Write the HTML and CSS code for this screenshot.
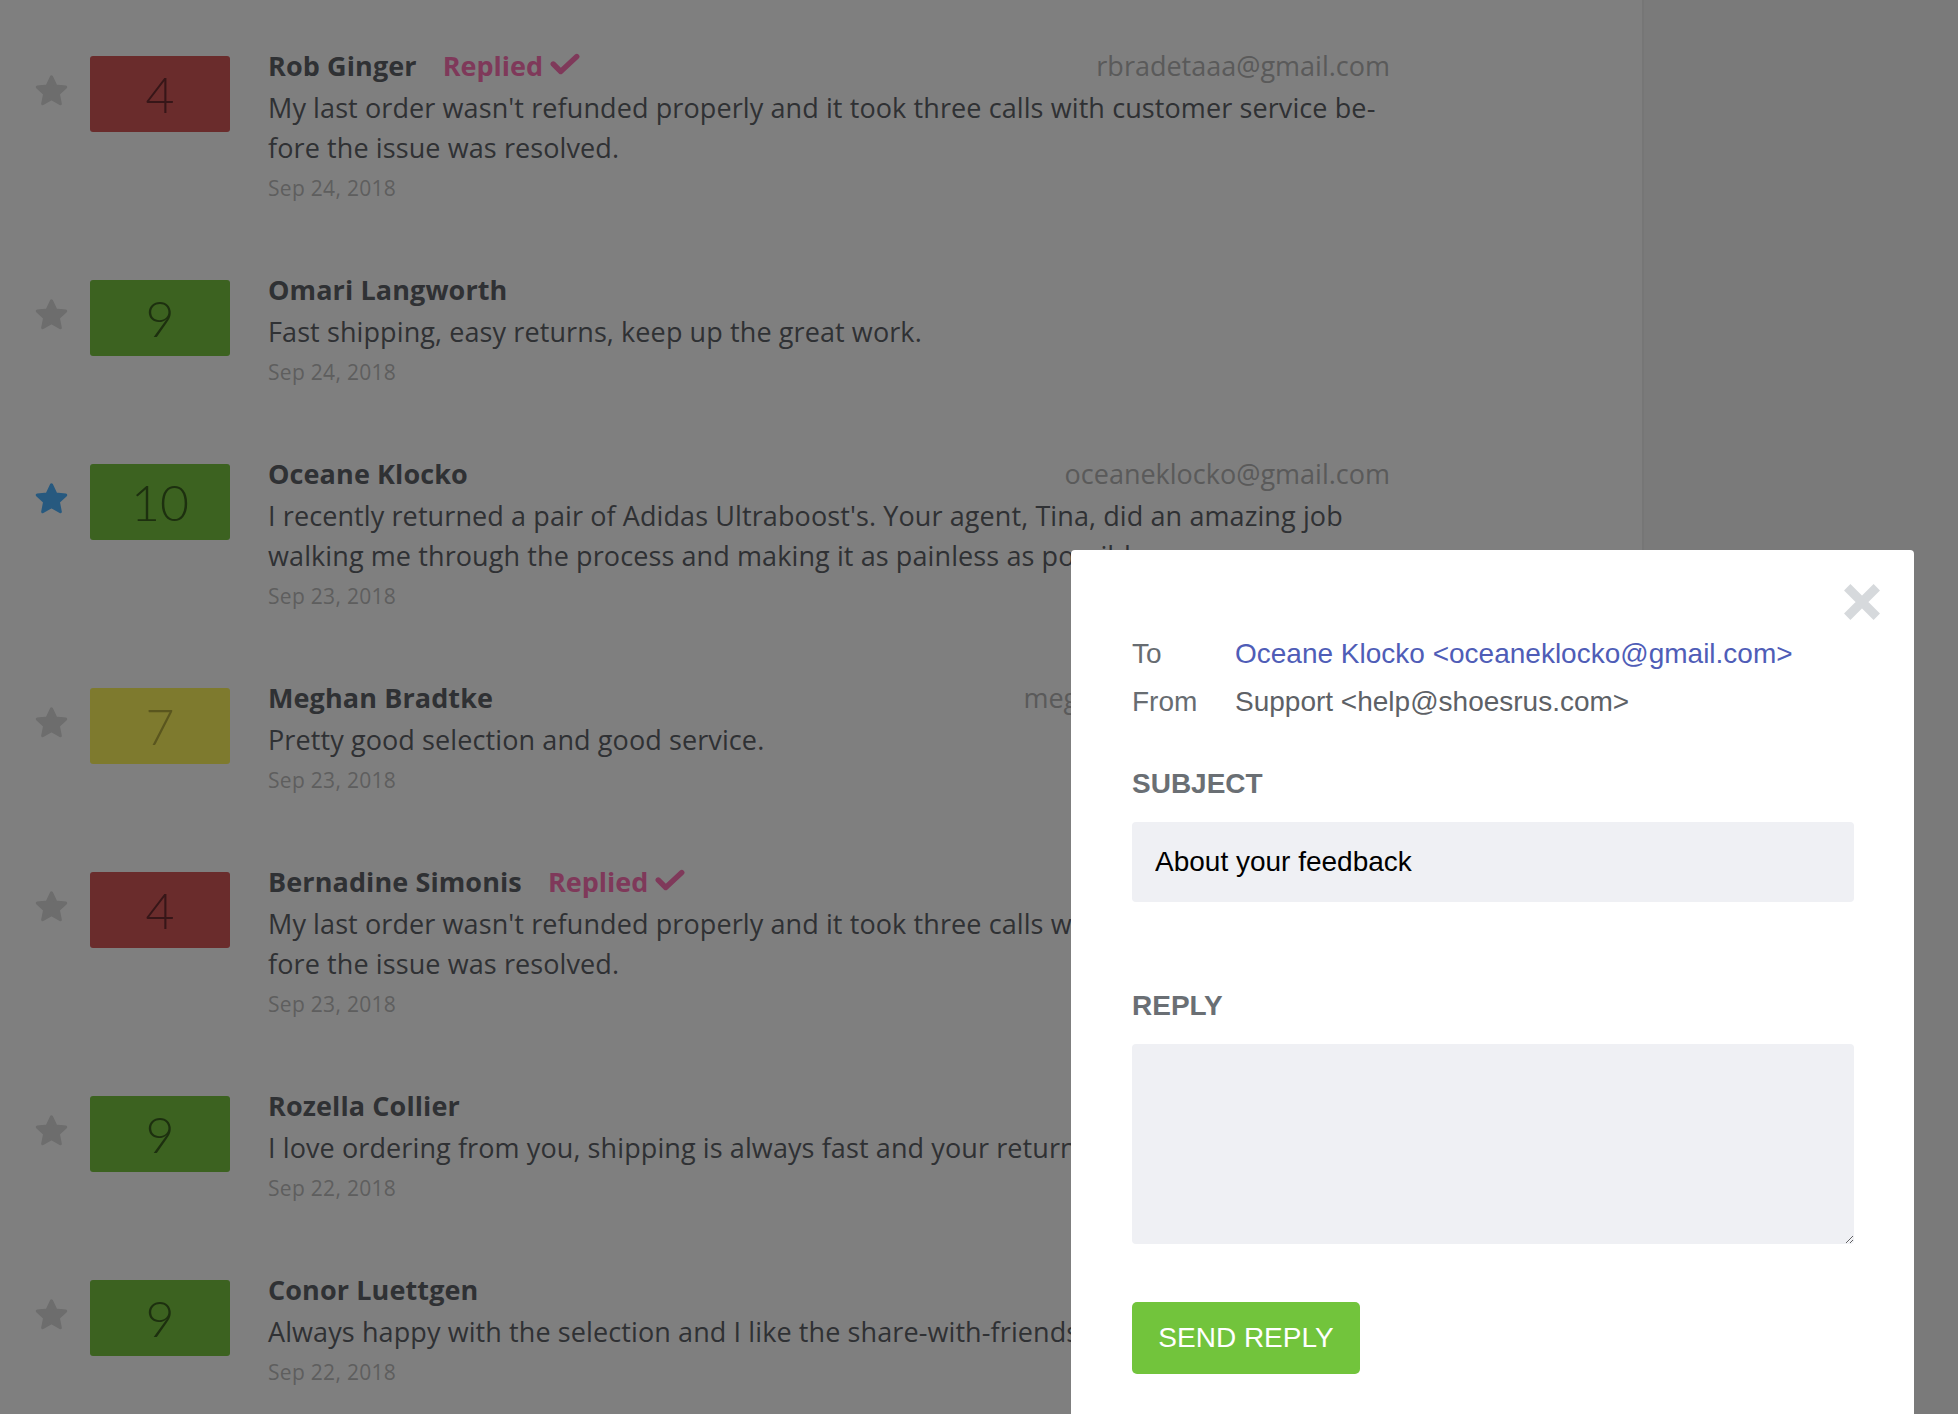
FILE: index.html
```html
<!DOCTYPE html>
<html lang="en">
<head>
<meta charset="utf-8">
<title>Feedback – Reply</title>
<link rel="stylesheet" href="styles.css">
</head>
<body>
<div class="page">
  <main class="feed">
    <div class="review">
      <svg class="star" viewBox="0 0 24 24"><polygon points="12,2.5 14.9,8.6 21.5,9.4 16.6,13.9 17.9,20.5 12,17.2 6.1,20.5 7.4,13.9 2.5,9.4 9.1,8.6"/></svg>
      <div class="score score-low">4</div>
      <div class="review-body">
        <div class="review-head">
          <span class="name">Rob Ginger</span>
          <span class="replied">Replied <svg class="check" viewBox="0 0 28 20"><polyline points="3,10 10,17 25,3"/></svg></span>
          <span class="email">rbradetaaa@gmail.com</span>
        </div>
        <p class="text">My last order wasn't refunded properly and it took three calls with customer service be&shy;fore the issue was resolved.</p>
        <div class="date">Sep 24, 2018</div>
      </div>
    </div>

    <div class="review">
      <svg class="star" viewBox="0 0 24 24"><polygon points="12,2.5 14.9,8.6 21.5,9.4 16.6,13.9 17.9,20.5 12,17.2 6.1,20.5 7.4,13.9 2.5,9.4 9.1,8.6"/></svg>
      <div class="score score-high">9</div>
      <div class="review-body">
        <div class="review-head">
          <span class="name">Omari Langworth</span>
        </div>
        <p class="text">Fast shipping, easy returns, keep up the great work.</p>
        <div class="date">Sep 24, 2018</div>
      </div>
    </div>

    <div class="review">
      <svg class="star star-on" viewBox="0 0 24 24"><polygon points="12,2.5 14.9,8.6 21.5,9.4 16.6,13.9 17.9,20.5 12,17.2 6.1,20.5 7.4,13.9 2.5,9.4 9.1,8.6"/></svg>
      <div class="score score-high">10</div>
      <div class="review-body">
        <div class="review-head">
          <span class="name">Oceane Klocko</span>
          <span class="email">oceaneklocko@gmail.com</span>
        </div>
        <p class="text">I recently returned a pair of Adidas Ultraboost's. Your agent, Tina, did an amazing job walking me through the process and making it as painless as possible.</p>
        <div class="date">Sep 23, 2018</div>
      </div>
    </div>

    <div class="review">
      <svg class="star" viewBox="0 0 24 24"><polygon points="12,2.5 14.9,8.6 21.5,9.4 16.6,13.9 17.9,20.5 12,17.2 6.1,20.5 7.4,13.9 2.5,9.4 9.1,8.6"/></svg>
      <div class="score score-mid">7</div>
      <div class="review-body">
        <div class="review-head">
          <span class="name">Meghan Bradtke</span>
          <span class="email">meghan_bradtke@gmail.com</span>
        </div>
        <p class="text">Pretty good selection and good service.</p>
        <div class="date">Sep 23, 2018</div>
      </div>
    </div>

    <div class="review">
      <svg class="star" viewBox="0 0 24 24"><polygon points="12,2.5 14.9,8.6 21.5,9.4 16.6,13.9 17.9,20.5 12,17.2 6.1,20.5 7.4,13.9 2.5,9.4 9.1,8.6"/></svg>
      <div class="score score-low">4</div>
      <div class="review-body">
        <div class="review-head">
          <span class="name">Bernadine Simonis</span>
          <span class="replied">Replied <svg class="check" viewBox="0 0 28 20"><polyline points="3,10 10,17 25,3"/></svg></span>
          <span class="email">bsimonis@gmail.com</span>
        </div>
        <p class="text">My last order wasn't refunded properly and it took three calls with customer service be&shy;fore the issue was resolved.</p>
        <div class="date">Sep 23, 2018</div>
      </div>
    </div>

    <div class="review">
      <svg class="star" viewBox="0 0 24 24"><polygon points="12,2.5 14.9,8.6 21.5,9.4 16.6,13.9 17.9,20.5 12,17.2 6.1,20.5 7.4,13.9 2.5,9.4 9.1,8.6"/></svg>
      <div class="score score-high">9</div>
      <div class="review-body">
        <div class="review-head">
          <span class="name">Rozella Collier</span>
          <span class="email">rcollier@gmail.com</span>
        </div>
        <p class="text">I love ordering from you, shipping is always fast and your returns are easy.</p>
        <div class="date">Sep 22, 2018</div>
      </div>
    </div>

    <div class="review">
      <svg class="star" viewBox="0 0 24 24"><polygon points="12,2.5 14.9,8.6 21.5,9.4 16.6,13.9 17.9,20.5 12,17.2 6.1,20.5 7.4,13.9 2.5,9.4 9.1,8.6"/></svg>
      <div class="score score-high">9</div>
      <div class="review-body">
        <div class="review-head">
          <span class="name">Conor Luettgen</span>
          <span class="email">conor@gmail.com</span>
        </div>
        <p class="text">Always happy with the selection and I like the share-with-friends feature.</p>
        <div class="date">Sep 22, 2018</div>
      </div>
    </div>
  </main>
  <aside class="sidebar"></aside>
</div>

<div class="overlay">
  <section class="modal">
    <button class="close" aria-label="Close">
      <svg viewBox="0 0 36 36"><path d="M4 4 L32 32 M32 4 L4 32"/></svg>
    </button>
    <div class="meta">
      <span class="meta-label">To</span>
      <span class="meta-to">Oceane Klocko &lt;oceaneklocko@gmail.com&gt;</span>
      <span class="meta-label">From</span>
      <span class="meta-value">Support &lt;help@shoesrus.com&gt;</span>
    </div>
    <label class="field-label" for="subject">SUBJECT</label>
    <input class="field-input" id="subject" type="text" value="About your feedback">
    <label class="field-label reply-label" for="reply">REPLY</label>
    <textarea class="field-area" id="reply"></textarea>
    <button class="send">SEND REPLY</button>
  </section>
</div>
</body>
</html>
```

FILE: styles.css
```css
html, body {
  margin: 0;
  padding: 0;
  height: 100%;
  overflow: hidden;
}

body {
  font-family: "Open Sans", "Lato", sans-serif;
  background: #ffffff;
}

.page {
  display: flex;
  height: 100vh;
}

.feed {
  width: 1642px;
  flex: 0 0 1642px;
  box-sizing: border-box;
  padding: 46px 252px 0 33px;
  display: flex;
  flex-direction: column;
  gap: 67px;
  background: #ffffff;
}

.sidebar {
  flex: 1;
  background: #f4f4f4;
  border-left: 2px solid #ececec;
}

.review {
  display: flex;
  align-items: flex-start;
}

.star {
  width: 37px;
  height: 36px;
  flex: 0 0 37px;
  margin-top: 27px;
  margin-right: 20px;
  fill: #dadada;
  stroke: #dadada;
  stroke-width: 2;
  stroke-linejoin: round;
}

.star-on {
  fill: #4fb3fe;
  stroke: #4fb3fe;
}

.score {
  flex: 0 0 140px;
  width: 140px;
  height: 76px;
  margin-top: 10px;
  margin-right: 38px;
  border-radius: 3px;
  display: flex;
  align-items: center;
  justify-content: center;
  font-family: "Lato", sans-serif;
  font-size: 50px;
  font-weight: 300;
  line-height: 1;
}

.score-low {
  background: #d45858;
  color: #6e2c30;
}

.score-high {
  background: #78c440;
  color: #3a601e;
}

.score-mid {
  background: #fcf45c;
  color: #b4ac3c;
}

.review-body {
  flex: 1;
  min-width: 0;
}

.review-head {
  display: flex;
  align-items: baseline;
  height: 40px;
  line-height: 40px;
  margin-bottom: 2px;
  font-size: 27px;
}

.name {
  font-weight: 700;
  color: #5f6368;
  letter-spacing: 0.1px;
}

.replied {
  margin-left: 26px;
  font-weight: 700;
  color: #fe73b5;
  display: inline-flex;
  align-items: center;
  gap: 7px;
}

.check {
  width: 30px;
  height: 22px;
  fill: none;
  stroke: #fe73b5;
  stroke-width: 5;
  stroke-linecap: round;
  stroke-linejoin: round;
  position: relative;
  top: -2px;
}

.email {
  margin-left: auto;
  color: #b4b4b4;
}

.text {
  margin: 0;
  font-size: 27px;
  line-height: 40px;
  letter-spacing: 0.1px;
  color: #5f6368;
  hyphens: manual;
}

.date {
  margin-top: 5px;
  font-size: 21px;
  line-height: 30px;
  letter-spacing: 0.3px;
  color: #bdbdbd;
}

/* overlay + modal */
.overlay {
  position: fixed;
  inset: 0;
  background: rgba(0, 0, 0, 0.5);
}

.modal {
  position: absolute;
  left: 1071px;
  top: 550px;
  width: 843px;
  bottom: -40px;
  box-sizing: border-box;
  padding: 80px 60px 0 61px;
  background: #ffffff;
  border-radius: 4px;
  font-family: "Liberation Sans", Arial, sans-serif;
  display: flex;
  flex-direction: column;
  align-items: flex-start;
}

.close {
  position: absolute;
  top: 33px;
  right: 33px;
  width: 38px;
  height: 38px;
  padding: 0;
  border: 0;
  background: none;
  cursor: pointer;
}

.close svg {
  width: 38px;
  height: 38px;
  stroke: #d6d9dc;
  stroke-width: 8.5;
  stroke-linecap: butt;
  fill: none;
  display: block;
}

.meta {
  display: grid;
  grid-template-columns: 103px 1fr;
  font-size: 28px;
  line-height: 48px;
  width: 100%;
}

.meta-label {
  color: #676c71;
}

.meta-value {
  color: #5d6166;
}

.meta-to {
  color: #4f5db7;
}

.field-label {
  margin-top: 41px;
  margin-bottom: 21px;
  font-size: 28px;
  line-height: 34px;
  font-weight: 700;
  color: #6a6f74;
}

.reply-label {
  margin-top: 87px;
}

.field-input,
.field-area {
  width: 100%;
  box-sizing: border-box;
  border: 0;
  border-radius: 4px;
  background: #eff0f4;
  font-family: "Liberation Sans", Arial, sans-serif;
  font-size: 28px;
  color: #000000;
  outline: none;
}

.field-input {
  height: 80px;
  padding: 0 23px;
}

.field-area {
  height: 200px;
  padding: 18px 23px;
  resize: vertical;
  display: block;
}

.send {
  margin-top: 58px;
  width: 228px;
  height: 72px;
  border: 0;
  border-radius: 5px;
  background: #72c43c;
  color: #ffffff;
  font-family: "Liberation Sans", Arial, sans-serif;
  font-size: 28px;
  padding: 0;
  cursor: pointer;
}
```
